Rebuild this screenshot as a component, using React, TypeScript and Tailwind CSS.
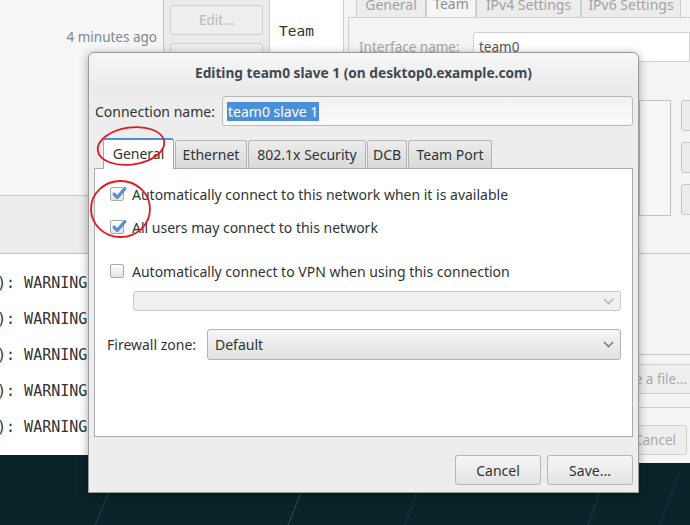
import React from "react";

const sans = { fontFamily: '"Noto Sans", "Open Sans", sans-serif' };
const mono = { fontFamily: '"DejaVu Sans Mono", "Liberation Mono", monospace' };

function Check({ checked }: { checked: boolean }) {
  return (
    <div className="relative w-[14px] h-[14px] shrink-0 rounded-[2px] border border-[#a9a9a9] bg-gradient-to-b from-[#ffffff] to-[#e4e4e4]">
      {checked && (
        <svg className="absolute left-[1px] top-[-2px]" width="15" height="15" viewBox="0 0 15 15">
          <path d="M2 8 L5.2 11.5 L13 2.5" fill="none" stroke="#3a76c4" strokeWidth="2.8" strokeLinecap="round" strokeLinejoin="round" />
          <path d="M2 8 L5.2 11.5 L13 2.5" fill="none" stroke="#9cc2ef" strokeWidth="0.8" strokeLinecap="round" strokeLinejoin="round" />
        </svg>
      )}
    </div>
  );
}

function Chevron({ color }: { color: string }) {
  return (
    <svg width="11" height="7" viewBox="0 0 11 7">
      <path d="M1 1 L5.5 5.5 L10 1" fill="none" stroke={color} strokeWidth="1.6" />
    </svg>
  );
}

function Tab({ label, active, w }: { label: string; active?: boolean; w: string }) {
  return (
    <div
      className={
        active
          ? "h-[31px] -mb-px z-10 flex items-center justify-center pb-[2px] bg-white border border-[#a8a8a8] border-b-0 border-t-2 border-t-[#4a90d9] rounded-t-[3px] " + w
          : "h-[28px] flex items-center justify-center bg-gradient-to-b from-[#ececec] to-[#d9d9d9] border border-[#b4b4b4] border-b-0 rounded-t-[3px] " + w
      }
    >
      <span className="text-[14px] text-[#2e3436]">{label}</span>
    </div>
  );
}

export default function App() {
  return (
    <div className="relative w-[690px] h-[525px] overflow-hidden bg-[#0b242a]" style={sans}>
      {/* desktop streaks */}
      <svg className="absolute inset-0" width="690" height="525">
        <path d="M95 525 L125 455" stroke="#1b3f46" strokeWidth="1.2" />
        <path d="M288 525 L310 470" stroke="#1d4a52" strokeWidth="1.2" />
        <path d="M405 525 L425 470" stroke="#163a41" strokeWidth="1" />
        <path d="M588 525 L608 470" stroke="#183e45" strokeWidth="1" />
        <path d="M660 525 L680 470" stroke="#163a41" strokeWidth="1" />
      </svg>

      {/* left background window */}
      <div className="absolute left-0 top-0 w-[163px] h-[254px] flex flex-col bg-[#f6f6f6]">
        <div className="h-[195px] flex flex-col items-end pr-[6px] pt-[27px]">
          <span className="text-[13.5px] text-[#7b8794]">4 minutes ago</span>
        </div>
        <div className="flex-1 bg-[#ececec] border-t border-[#c8c8c8] border-b border-b-[#c2c2c2]" />
      </div>

      {/* terminal */}
      <div className="absolute left-0 top-[254px] w-[88px] h-[201px] bg-white flex flex-col pt-[19px] gap-[15px] overflow-hidden" style={mono}>
        {[0, 1, 2, 3, 4].map((i) => (
          <div key={i} className="h-[21px] text-[15px] leading-[21px] text-[#333] ml-[-12px] whitespace-pre">0): WARNING</div>
        ))}
      </div>

      {/* connection editor background window */}
      <div className="absolute left-[163px] top-0 w-[527px] h-[463px] flex bg-[#ececec] border-l border-[#c4c4c4]">
        <div className="w-[105px] flex flex-col gap-[8px] px-[6px] pt-[5px]">
          <div className="h-[30px] rounded-[3px] border border-[#cfcfcf] bg-[#eeeeee] flex items-center justify-center text-[13.5px] text-[#b9b9b9]">Edit...</div>
          <div className="h-[30px] rounded-[3px] border border-[#cfcfcf] bg-[#eeeeee]" />
        </div>
        <div className="w-[75px] bg-white border-l border-r border-[#d0d0d0] pl-[9px] pt-[18px]">
          <span className="text-[14.5px] text-[#333]" style={mono}>Team</span>
        </div>
        <div className="flex-1 flex flex-col bg-[#f4f4f4] pl-[4px]">
          <div className="h-[17px] shrink-0 flex items-end pl-[8px]">
            <div className="h-[27px] w-[70px] flex items-center justify-center border border-[#cfcfcf] border-b-0 text-[14px] text-[#a2a2a2] bg-[#ececec]">General</div>
            <div className="h-[28px] w-[50px] flex items-center justify-center border border-[#cfcfcf] border-b-0 text-[14px] text-[#8e8e8e] bg-[#f6f6f6]">Team</div>
            <div className="h-[27px] w-[105px] flex items-center justify-center border border-[#cfcfcf] border-b-0 text-[14px] text-[#a2a2a2] bg-[#ececec]">IPv4 Settings</div>
            <div className="h-[27px] w-[100px] flex items-center justify-center border border-[#cfcfcf] border-b-0 text-[14px] text-[#a2a2a2] bg-[#ececec]">IPv6 Settings</div>
          </div>
          <div className="flex-1 border-l border-t border-[#cfcfcf] flex flex-col">
            <div className="flex items-center h-[30px] mt-[14px] pl-[10px]">
              <span className="w-[114px] text-[13.5px] text-[#a6a6a6]">Interface name:</span>
              <div className="flex-1 h-[30px] bg-white border border-[#d2d2d2] rounded-l-[3px] flex items-center pl-[5px] text-[13.5px] text-[#555]">team0</div>
            </div>
          </div>
        </div>
        {/* right hidden parts */}
        <div className="absolute left-[475px] top-[100px] w-[32px] h-[116px] border border-[#c2c2c2] bg-[#f6f6f6]" />
        <div className="absolute left-[517px] top-[100px] w-[20px] h-[31px] rounded-[3px] border border-[#c6c6c6] bg-[#ececec]" />
        <div className="absolute left-[517px] top-[142px] w-[20px] h-[31px] rounded-[3px] border border-[#c6c6c6] bg-[#ececec]" />
        <div className="absolute left-[517px] top-[184px] w-[20px] h-[31px] rounded-[3px] border border-[#c6c6c6] bg-[#ececec]" />
        <div className="absolute left-[475px] top-[253px] w-[60px] h-[1px] bg-[#c6c6c6]" />
        <div className="absolute left-[475px] top-[354px] w-[60px] h-[1px] bg-[#c6c6c6]" />
        <div className="absolute left-[420px] top-[364px] w-[110px] h-[30px] rounded-[3px] border border-[#cfcfcf] bg-[#eeeeee] flex items-center justify-end pr-[6px] text-[13.5px] text-[#a8a8a8]">Choose a file...</div>
        <div className="absolute left-[475px] top-[407px] w-[60px] h-[1px] bg-[#d0d0d0]" />
        <div className="absolute left-[440px] top-[425px] w-[83px] h-[30px] rounded-[3px] border border-[#cfcfcf] bg-[#eeeeee] flex items-center justify-end pr-[10px] text-[13.5px] text-[#a8a8a8]">Cancel</div>
      </div>

      {/* dialog */}
      <div className="absolute left-[88px] top-[52px] w-[551px] h-[441px] flex flex-col bg-[#ededed] border border-[#9a9a9a] rounded-t-[6px] shadow-[0_2px_10px_rgba(0,0,0,0.35)]">
        <div className="h-[40px] shrink-0 flex items-center justify-center rounded-t-[6px] bg-gradient-to-b from-[#f7f7f7] to-[#e9e9e9]">
          <span className="text-[13.7px] font-bold text-[#3e4a52]">Editing team0 slave 1 (on desktop0.example.com)</span>
        </div>
        <div className="flex items-center h-[30px] mt-[3px] pl-[6px] pr-[5px]">
          <span className="w-[127px] text-[14px] text-[#2e3436]">Connection name:</span>
          <div className="flex-1 h-[30px] rounded-[3px] border border-[#b9b9b9] bg-gradient-to-b from-[#f2f2f2] to-[#fbfbfb] flex items-center pl-[4px]">
            <span className="bg-[#4a90d9] text-white text-[14px] leading-[19px] px-[1px]">team0 slave 1</span>
          </div>
        </div>
        <div className="flex items-end h-[31px] mt-[11px] pl-[14px] gap-[1px]">
          <Tab label="General" active w="w-[71px]" />
          <Tab label="Ethernet" w="w-[72px]" />
          <Tab label="802.1x Security" w="w-[118px]" />
          <Tab label="DCB" w="w-[40px]" />
          <Tab label="Team Port" w="w-[84px]" />
        </div>
        <div className="mx-[5px] h-[269px] bg-white border border-[#aaaaaa] flex flex-col text-[14px] text-[#2e3436]">
          <div className="flex items-center gap-[8px] pl-[15px] mt-[16px] h-[18px]">
            <Check checked />
            <span>Automatically connect to this network when it is available</span>
          </div>
          <div className="flex items-center gap-[8px] pl-[15px] mt-[15px] h-[18px]">
            <Check checked />
            <span>All users may connect to this network</span>
          </div>
          <div className="flex items-center gap-[8px] pl-[15px] mt-[26px] h-[18px]">
            <Check checked={false} />
            <span>Automatically connect to VPN when using this connection</span>
          </div>
          <div className="ml-[38px] mr-[11px] mt-[11px] h-[20px] rounded-[3px] border border-[#c9c9c9] bg-[#f0f0f0] flex items-center justify-end pr-[6px]">
            <Chevron color="#b5b5b5" />
          </div>
          <div className="flex items-center pl-[12px] mr-[11px] mt-[18px] h-[31px]">
            <span className="w-[100px]">Firewall zone:</span>
            <div className="flex-1 h-[31px] rounded-[3px] border border-[#b3b3b3] bg-gradient-to-b from-[#f6f6f6] to-[#e1e1e1] flex items-center justify-between pl-[7px] pr-[6px]">
              <span>Default</span>
              <Chevron color="#7c7c7c" />
            </div>
          </div>
        </div>
        <div className="flex justify-end gap-[6px] pr-[5px] mt-[18px]">
          <div className="w-[86px] h-[30px] rounded-[3px] border border-[#b5b5b5] bg-gradient-to-b from-[#f6f6f6] to-[#e3e3e3] flex items-center justify-center text-[14px] text-[#2e3436]">Cancel</div>
          <div className="w-[86px] h-[30px] rounded-[3px] border border-[#b5b5b5] bg-gradient-to-b from-[#f6f6f6] to-[#e3e3e3] flex items-center justify-center text-[14px] text-[#2e3436]">Save...</div>
        </div>
      </div>

      {/* red annotation ellipses */}
      <svg className="absolute inset-0 z-30 pointer-events-none" width="690" height="525">
        <ellipse cx="131" cy="146" rx="33.5" ry="18.5" fill="none" stroke="#e01a22" strokeWidth="1.8" transform="rotate(-8 131 146)" />
        <ellipse cx="120.5" cy="209" rx="29.5" ry="28" fill="none" stroke="#e01a22" strokeWidth="1.8" />
      </svg>
    </div>
  );
}
